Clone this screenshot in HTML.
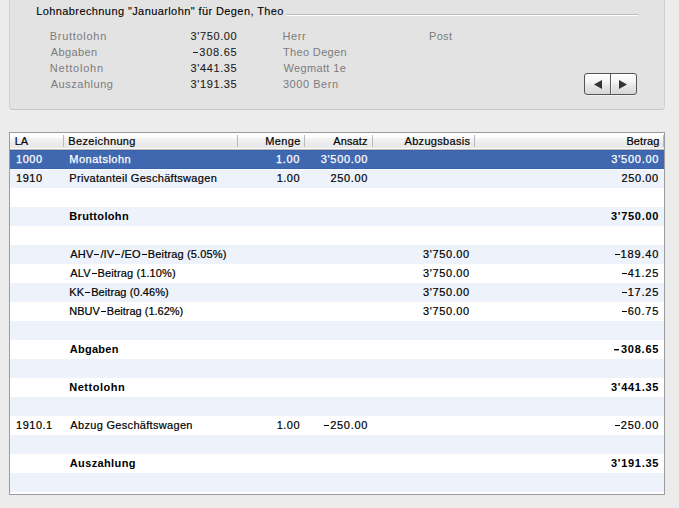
<!DOCTYPE html>
<html><head><meta charset="utf-8">
<style>

html,body{margin:0;padding:0;}
body{width:679px;height:508px;overflow:hidden;background:#ececec;position:relative;font-family:"Liberation Sans",sans-serif;font-size:11px;color:#000;}
.a{position:absolute;white-space:nowrap;line-height:13px;-webkit-text-stroke:0.2px currentColor;}
#panel{position:absolute;left:9px;top:-10px;width:654px;height:118px;background:#e3e3e3;border:1px solid #d0d0d0;border-bottom-color:#c6c6c6;border-radius:4px;}
#tline{position:absolute;left:286px;top:14px;width:352px;height:1px;background:#bcbcbc;border-bottom:1px solid #fff;}
.lbl{color:#7c7c7c;-webkit-text-stroke:0;}
.val{color:#1c1c1c;-webkit-text-stroke:0.1px currentColor;}
#btn{position:absolute;left:584px;top:73px;width:51px;height:20px;border:1px solid #555;border-radius:3px;background:linear-gradient(#ffffff,#f4f4f4 40%,#e6e6e6 60%,#d6d6d6);box-shadow:0 1px 0 rgba(255,255,255,0.5);}
#btndiv{position:absolute;left:610px;top:73px;width:1px;height:22px;background:#5a5a5a;}
#table{position:absolute;left:9px;top:132px;width:654px;height:361px;border:1px solid #9c9c9c;background:#fff;}
.hdr{position:absolute;left:10px;top:133px;width:654px;height:17px;background:linear-gradient(#ffffff 0px,#fdfdfd 5px,#f3f3f3 5px,#efefef 9px,#ececec 9px,#e8e8e8 15px);}
.sep{position:absolute;top:135px;width:1px;height:12px;background:#bababa;}
.row{position:absolute;left:10px;width:654px;height:19px;}
.alt{background:#edf2fb;}
.wht{background:#fff;}
.sel{background:#4068b0;}
.b{font-weight:bold;-webkit-text-stroke:0;}

.w{color:#fff;-webkit-text-stroke:0.25px #fff;}

#title{-webkit-text-stroke:0.1px currentColor;}

.m{display:inline-block;width:5px;height:1px;background:currentColor;vertical-align:3px;margin:0 1px 0 1px;}
.b .m{height:1px;vertical-align:3px;box-shadow:0 1px 0 rgba(0,0,0,0.4);margin-right:2px;}

</style></head><body>
<div id="panel"></div>
<div id="tline"></div>
<div id="btn"></div>
<div id="btndiv"></div>
<div id="btnhl" style="position:absolute;left:611px;top:74px;width:1px;height:20px;background:rgba(255,255,255,0.6)"></div>
<svg style="position:absolute;left:0;top:0" width="679" height="508">
<polygon points="594,84.5 602,80 602,89" fill="#333"/>
<polygon points="627,84.5 619,80 619,89" fill="#333"/>
</svg>
<div id="table"></div>
<div class="row sel" style="top:150px"></div>
<div class="row alt" style="top:169px"></div>
<div class="row wht" style="top:188px"></div>
<div class="row alt" style="top:207px"></div>
<div class="row wht" style="top:226px"></div>
<div class="row alt" style="top:245px"></div>
<div class="row wht" style="top:264px"></div>
<div class="row alt" style="top:283px"></div>
<div class="row wht" style="top:302px"></div>
<div class="row alt" style="top:321px"></div>
<div class="row wht" style="top:340px"></div>
<div class="row alt" style="top:359px"></div>
<div class="row wht" style="top:378px"></div>
<div class="row alt" style="top:397px"></div>
<div class="row wht" style="top:416px"></div>
<div class="row alt" style="top:435px"></div>
<div class="row wht" style="top:454px"></div>
<div class="row alt" style="top:473px"></div>
<div style="position:absolute;left:10px;top:150px;width:654px;height:1px;background:#3862a9"></div>
<div style="position:absolute;left:10px;top:168px;width:654px;height:1px;background:#3862a9"></div>
<div style="position:absolute;left:10px;top:169px;width:654px;height:1px;background:#fbfcff"></div>
<div class="hdr"></div>
<div class="sep" style="left:63px"></div>
<div class="sep" style="left:237px"></div>
<div class="sep" style="left:304px"></div>
<div class="sep" style="left:372px"></div>
<div class="sep" style="left:474px"></div>
<div class="sep" style="left:663px"></div>
<div style="position:absolute;left:10px;top:148px;width:654px;height:1px;background:#fafafa"></div>
<div style="position:absolute;left:10px;top:149px;width:654px;height:1px;background:#c0bcb5"></div>
<div id="r0c0" class="a  w" style="left:16.00px;top:153px;letter-spacing:0.517px;">1000</div>
<div id="r0c1" class="a  w" style="left:69.30px;top:153px;letter-spacing:0.506px;">Monatslohn</div>
<div id="r0c2" class="a  w" style="right:378.90px;top:153px;letter-spacing:0.667px;">1.00</div>
<div id="r0c3" class="a  w" style="right:310.90px;top:153px;letter-spacing:0.686px;">3'500.00</div>
<div id="r0c5" class="a  w" style="right:19.80px;top:153px;letter-spacing:0.757px;">3'500.00</div>
<div id="r1c0" class="a " style="left:16.00px;top:172px;letter-spacing:0.517px;">1910</div>
<div id="r1c1" class="a " style="left:69.30px;top:172px;letter-spacing:0.310px;">Privatanteil Geschäftswagen</div>
<div id="r1c2" class="a " style="right:378.90px;top:172px;letter-spacing:0.500px;">1.00</div>
<div id="r1c3" class="a " style="right:310.90px;top:172px;letter-spacing:0.680px;">250.00</div>
<div id="r1c5" class="a " style="right:20.30px;top:172px;letter-spacing:0.580px;">250.00</div>
<div id="r3c1" class="a b" style="left:69.30px;top:210px;letter-spacing:0.350px;">Bruttolohn</div>
<div id="r3c5" class="a b" style="right:19.80px;top:210px;letter-spacing:0.729px;">3'750.00</div>
<div id="r5c1" class="a " style="left:70.30px;top:248px;letter-spacing:0.160px;">AHV<span class="m"></span>/IV<span class="m"></span>/EO<span class="m"></span>Beitrag (5.05%)</div>
<div id="r5c4" class="a " style="right:209.20px;top:248px;letter-spacing:0.607px;">3'750.00</div>
<div id="r5c5" class="a " style="right:19.80px;top:248px;letter-spacing:0.833px;"><span class="m"></span>189.40</div>
<div id="r6c1" class="a " style="left:70.30px;top:267px;letter-spacing:0.111px;">ALV<span class="m"></span>Beitrag (1.10%)</div>
<div id="r6c4" class="a " style="right:209.20px;top:267px;letter-spacing:0.607px;">3'750.00</div>
<div id="r6c5" class="a " style="right:19.80px;top:267px;letter-spacing:0.800px;"><span class="m"></span>41.25</div>
<div id="r7c1" class="a " style="left:69.30px;top:286px;letter-spacing:0.082px;">KK<span class="m"></span>Beitrag (0.46%)</div>
<div id="r7c4" class="a " style="right:209.20px;top:286px;letter-spacing:0.607px;">3'750.00</div>
<div id="r7c5" class="a " style="right:19.80px;top:286px;letter-spacing:0.800px;"><span class="m"></span>17.25</div>
<div id="r8c1" class="a " style="left:69.30px;top:305px;">NBUV<span class="m"></span>Beitrag (1.62%)</div>
<div id="r8c4" class="a " style="right:209.20px;top:305px;letter-spacing:0.607px;">3'750.00</div>
<div id="r8c5" class="a " style="right:19.80px;top:305px;letter-spacing:0.800px;"><span class="m"></span>60.75</div>
<div id="r10c1" class="a b" style="left:69.80px;top:343px;letter-spacing:0.250px;">Abgaben</div>
<div id="r10c5" class="a b" style="right:19.80px;top:343px;letter-spacing:0.767px;"><span class="m"></span>308.65</div>
<div id="r12c1" class="a b" style="left:69.30px;top:381px;letter-spacing:0.500px;">Nettolohn</div>
<div id="r12c5" class="a b" style="right:19.80px;top:381px;letter-spacing:0.736px;">3'441.35</div>
<div id="r14c0" class="a " style="left:16.00px;top:419px;letter-spacing:0.510px;">1910.1</div>
<div id="r14c1" class="a " style="left:70.30px;top:419px;letter-spacing:0.316px;">Abzug Geschäftswagen</div>
<div id="r14c2" class="a " style="right:378.90px;top:419px;letter-spacing:0.500px;">1.00</div>
<div id="r14c3" class="a " style="right:310.90px;top:419px;letter-spacing:0.717px;"><span class="m"></span>250.00</div>
<div id="r14c5" class="a " style="right:19.80px;top:419px;letter-spacing:0.800px;"><span class="m"></span>250.00</div>
<div id="r16c1" class="a b" style="left:69.80px;top:457px;letter-spacing:0.367px;">Auszahlung</div>
<div id="r16c5" class="a b" style="right:19.80px;top:457px;letter-spacing:0.736px;">3'191.35</div>
<div id="h_LA" class="a " style="left:14.65px;top:135px;">LA</div>
<div id="h_Bezeichnung" class="a " style="left:68.25px;top:135px;letter-spacing:0.360px;">Bezeichnung</div>
<div id="h_Menge" class="a " style="right:378.25px;top:135px;letter-spacing:0.363px;">Menge</div>
<div id="h_Ansatz" class="a " style="right:311.45px;top:135px;letter-spacing:0.100px;">Ansatz</div>
<div id="h_Abzugsbasis" class="a " style="right:208.70px;top:135px;letter-spacing:0.310px;">Abzugsbasis</div>
<div id="h_Betrag" class="a " style="right:19.60px;top:135px;letter-spacing:0.100px;">Betrag</div>
<div id="title" class="a " style="left:36.20px;top:5px;letter-spacing:0.405px;">Lohnabrechnung "Januarlohn" für Degen, Theo</div>
<div id="pl0" class="a lbl" style="left:49.75px;top:30px;letter-spacing:0.706px;">Bruttolohn</div>
<div id="pl1" class="a lbl" style="left:50.75px;top:46px;letter-spacing:0.392px;">Abgaben</div>
<div id="pl2" class="a lbl" style="left:49.75px;top:62px;letter-spacing:0.787px;">Nettolohn</div>
<div id="pl3" class="a lbl" style="left:50.75px;top:78px;letter-spacing:0.517px;">Auszahlung</div>
<div id="pv0" class="a val" style="right:441.70px;top:30px;letter-spacing:0.614px;">3'750.00</div>
<div id="pv1" class="a val" style="right:441.70px;top:46px;letter-spacing:0.717px;"><span class="m"></span>308.65</div>
<div id="pv2" class="a val" style="right:441.70px;top:62px;letter-spacing:0.614px;">3'441.35</div>
<div id="pv3" class="a val" style="right:441.70px;top:78px;letter-spacing:0.614px;">3'191.35</div>
<div id="pa0" class="a lbl" style="left:282.45px;top:30px;letter-spacing:0.633px;">Herr</div>
<div id="pa1" class="a lbl" style="left:282.95px;top:46px;letter-spacing:0.356px;">Theo Degen</div>
<div id="pa2" class="a lbl" style="left:283.45px;top:62px;letter-spacing:0.361px;">Wegmatt 1e</div>
<div id="pa3" class="a lbl" style="left:282.95px;top:78px;letter-spacing:0.544px;">3000 Bern</div>
<div id="post" class="a lbl" style="left:429.00px;top:30px;letter-spacing:0.333px;">Post</div>
</body></html>
